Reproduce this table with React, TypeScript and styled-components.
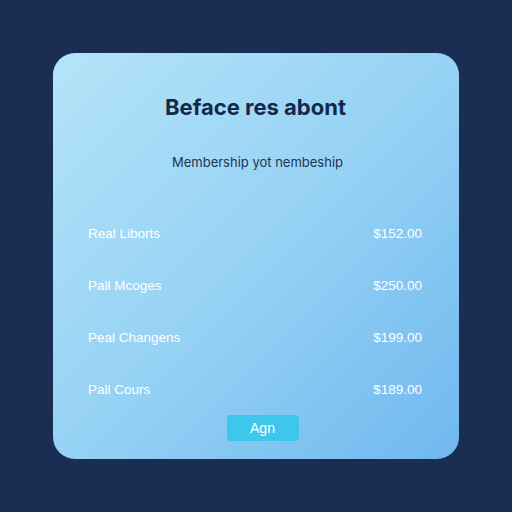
import React from "react";
import styled, { createGlobalStyle } from "styled-components";

const GlobalStyle = createGlobalStyle`
  html, body {
    margin: 0;
    padding: 0;
    background: #1a2d52;
  }
  #root {
    width: 512px;
    height: 512px;
    display: flex;
    align-items: center;
    justify-content: center;
  }
`;

interface Item {
  name: string;
  price: string;
}

const items: Item[] = [
  { name: "Real Liborts", price: "$152.00" },
  { name: "Pall Mcoges", price: "$250.00" },
  { name: "Peal Changens", price: "$199.00" },
  { name: "Pall Cours", price: "$189.00" },
];

export default function App() {
  return (
    <>
      <GlobalStyle />
      <Card>
        <Title>Beface res abont</Title>
        <Subtitle>Membership yot nembeship</Subtitle>
        <List>
          {items.map((item) => (
            <Row key={item.name}>
              <span>{item.name}</span>
              <span>{item.price}</span>
            </Row>
          ))}
        </List>
        <Button>Agn</Button>
      </Card>
    </>
  );
}

const Card = styled.div`
  width: 406px;
  height: 406px;
  box-sizing: border-box;
  border-radius: 22px;
  background: linear-gradient(135deg, #b4e4f8 0%, #96d2f4 50%, #70b8ef 100%);
  padding: 40px 36px 18px 35px;
  display: flex;
  flex-direction: column;
  align-items: stretch;
`;

const Title = styled.h1`
  margin: 0;
  font-family: Inter, "Liberation Sans", sans-serif;
  font-size: 22px;
  line-height: 28px;
  font-weight: 700;
  color: #13294a;
  text-align: center;
`;

const Subtitle = styled.p`
  margin: 32px 0 0 4px;
  font-family: Inter, "Liberation Sans", sans-serif;
  font-size: 13px;
  line-height: 18px;
  color: #1d3454;
  text-align: center;
`;

const List = styled.div`
  margin-top: 36px;
  display: flex;
  flex-direction: column;
`;

const Row = styled.div`
  height: 52px;
  display: flex;
  align-items: center;
  justify-content: space-between;
  padding-right: 1px;
  font-family: "Liberation Sans", Arial, sans-serif;
  font-size: 13.5px;
  color: #ffffff;
`;

const Button = styled.button`
  align-self: center;
  margin-left: 14px;
  width: 72px;
  height: 26px;
  border: none;
  border-radius: 3px;
  background: #3fc6ec;
  color: #ffffff;
  font-family: "Liberation Sans", Arial, sans-serif;
  font-size: 14px;
  padding: 0;
`;
